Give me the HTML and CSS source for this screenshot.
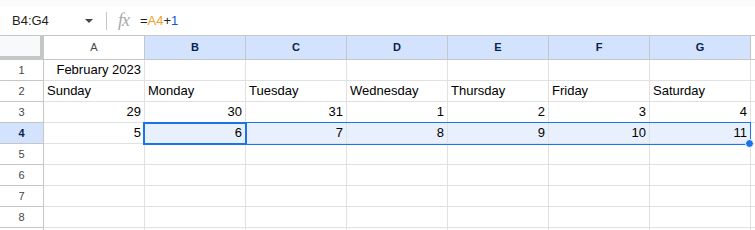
FILE: index.html
```html
<!DOCTYPE html>
<html lang="en">
<head>
  <meta charset="UTF-8">
  <title>Calendar sheet</title>
  <link rel="stylesheet" href="styles.css">
</head>
<body>

  <!-- thanh công thức -->
  <div class="top-strip"></div>
  <div class="formula-bar">
    <div class="name-box">B4:G4</div>
    <div class="caret"></div>
    <div class="sep"></div>
    <div class="fx">fx</div>
    <div class="formula">=<span class="ref">A4</span>+<span class="num">1</span></div>
  </div>

  <!-- lưới bảng tính -->
  <div class="sheet">
    <div class="corner"></div>
    <div class="col-head">A</div>
    <div class="col-head sel">B</div>
    <div class="col-head sel">C</div>
    <div class="col-head sel">D</div>
    <div class="col-head sel">E</div>
    <div class="col-head sel">F</div>
    <div class="col-head sel">G</div>
    <div class="col-head"></div>

    <div class="row-head">1</div>
    <div class="cell right">February 2023</div>
    <div class="cell"></div><div class="cell"></div><div class="cell"></div>
    <div class="cell"></div><div class="cell"></div><div class="cell"></div><div class="cell"></div>

    <div class="row-head">2</div>
    <div class="cell">Sunday</div>
    <div class="cell">Monday</div>
    <div class="cell">Tuesday</div>
    <div class="cell">Wednesday</div>
    <div class="cell">Thursday</div>
    <div class="cell">Friday</div>
    <div class="cell">Saturday</div>
    <div class="cell"></div>

    <div class="row-head">3</div>
    <div class="cell right">29</div>
    <div class="cell right">30</div>
    <div class="cell right">31</div>
    <div class="cell right">1</div>
    <div class="cell right">2</div>
    <div class="cell right">3</div>
    <div class="cell right">4</div>
    <div class="cell"></div>

    <div class="row-head sel">4</div>
    <div class="cell right">5</div>
    <div class="cell right in-range">6</div>
    <div class="cell right in-range">7</div>
    <div class="cell right in-range">8</div>
    <div class="cell right in-range">9</div>
    <div class="cell right in-range">10</div>
    <div class="cell right in-range">11</div>
    <div class="cell"></div>

    <div class="row-head">5</div>
    <div class="cell"></div><div class="cell"></div><div class="cell"></div><div class="cell"></div>
    <div class="cell"></div><div class="cell"></div><div class="cell"></div><div class="cell"></div>

    <div class="row-head">6</div>
    <div class="cell"></div><div class="cell"></div><div class="cell"></div><div class="cell"></div>
    <div class="cell"></div><div class="cell"></div><div class="cell"></div><div class="cell"></div>

    <div class="row-head">7</div>
    <div class="cell"></div><div class="cell"></div><div class="cell"></div><div class="cell"></div>
    <div class="cell"></div><div class="cell"></div><div class="cell"></div><div class="cell"></div>

    <div class="row-head">8</div>
    <div class="cell"></div><div class="cell"></div><div class="cell"></div><div class="cell"></div>
    <div class="cell"></div><div class="cell"></div><div class="cell"></div><div class="cell"></div>

    <!-- hàng 9 bị cắt ở mép dưới -->
    <div class="row-head"></div>
    <div class="cell"></div><div class="cell"></div><div class="cell"></div><div class="cell"></div>
    <div class="cell"></div><div class="cell"></div><div class="cell"></div><div class="cell"></div>

    <!-- vùng chọn B4:G4 -->
    <div class="range"></div>
    <div class="active-cell"></div>
    <div class="fill-handle"></div>
  </div>

</body>
</html>
```

FILE: styles.css
```css
body {
  margin: 0;
  font-family: "Liberation Sans", Arial, sans-serif;
  font-size: 13px;
  color: #000;
  background: #fff;
  overflow: hidden;
}

.top-strip {
  height: 6px;
  background: #f9fbfd;
}

.formula-bar {
  height: 29px;
  display: flex;
  align-items: center;
}

.name-box {
  width: 73px;
  padding-left: 12px;
  color: #1f1f1f;
}

.caret {
  width: 0;
  height: 0;
  border-left: 4px solid transparent;
  border-right: 4px solid transparent;
  border-top: 4px solid #444746;
  margin-top: 1px;
}

.sep {
  width: 1px;
  height: 18px;
  background: #c4c7c5;
  margin-left: 13px;
}

.fx {
  font-family: "Liberation Serif", serif;
  font-style: italic;
  font-size: 18px;
  color: #a8a8a8;
  margin-left: 11px;
  letter-spacing: -1px;
}

.formula {
  margin-left: 11px;
  color: #1f1f1f;
}

.formula .ref {
  color: #f29d2f;
}

.formula .num {
  color: #1155cc;
}

.sheet {
  position: relative;
  display: grid;
  grid-template-columns: 44px repeat(7, 101px) 1fr;
  grid-template-rows: 24px repeat(9, 21px);
  border-top: 1px solid #c4c7c5;
}

.sheet > div {
  box-sizing: border-box;
}

.corner {
  background: #f8f9fa;
  border-right: 4px solid #c4c7c5;
  border-bottom: 4px solid #c4c7c5;
}

.col-head {
  border-right: 1px solid #c4c7c5;
  border-bottom: 1px solid #c4c7c5;
  text-align: center;
  line-height: 23px;
  font-size: 11px;
  color: #444746;
}

.row-head {
  border-right: 1px solid #c4c7c5;
  border-bottom: 1px solid #c4c7c5;
  text-align: center;
  line-height: 20px;
  font-size: 11px;
  color: #444746;
}

.col-head.sel,
.row-head.sel {
  background: #d3e3fd;
  color: #0b1f4d;
  font-weight: bold;
}

.cell {
  border-right: 1px solid #e1e1e1;
  border-bottom: 1px solid #e1e1e1;
  padding: 0 3px;
  line-height: 20px;
  white-space: nowrap;
}

.cell.right {
  text-align: right;
}

.cell.in-range {
  background: #e8f0fe;
}

.range {
  position: absolute;
  left: 144px;
  top: 86px;
  width: 607px;
  height: 23px;
  border: 1px solid #1a73e8;
  pointer-events: none;
}

.active-cell {
  position: absolute;
  left: 143px;
  top: 86px;
  width: 104px;
  height: 23px;
  border: 2px solid #1a73e8;
}

.fill-handle {
  position: absolute;
  left: 745px;
  top: 103px;
  width: 9px;
  height: 9px;
  border-radius: 50%;
  background: #1a73e8;
  border: 1px solid #fff;
}
```
